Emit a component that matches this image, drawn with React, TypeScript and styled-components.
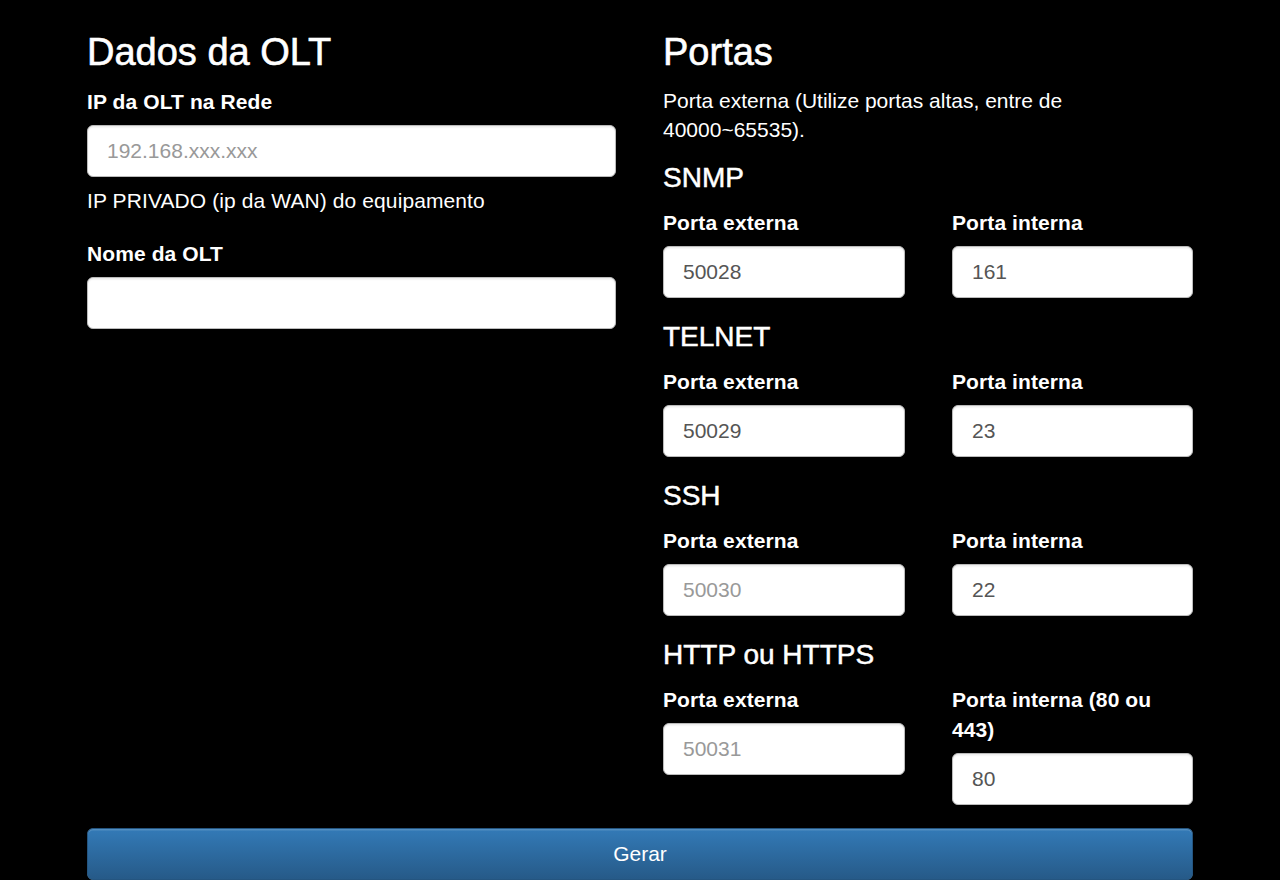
import React from 'react';
import styled, { createGlobalStyle } from 'styled-components';

const GlobalStyle = createGlobalStyle`
	* {
		box-sizing: border-box;
	}
	html,
	body {
		margin: 0;
		padding: 0;
		background: #000;
	}
	body {
		font-family: 'Liberation Sans', Arial, Helvetica, sans-serif;
		font-size: 21px;
		line-height: 30px;
		color: #fff;
	}
`;

type PortField = {
	label: string;
	value?: string;
	placeholder?: string;
};

type PortGroup = {
	title: string;
	external: PortField;
	internal: PortField;
};

const groups: PortGroup[] = [
	{
		title: 'SNMP',
		external: { label: 'Porta externa', value: '50028' },
		internal: { label: 'Porta interna', value: '161' },
	},
	{
		title: 'TELNET',
		external: { label: 'Porta externa', value: '50029' },
		internal: { label: 'Porta interna', value: '23' },
	},
	{
		title: 'SSH',
		external: { label: 'Porta externa', placeholder: '50030' },
		internal: { label: 'Porta interna', value: '22' },
	},
	{
		title: 'HTTP ou HTTPS',
		external: { label: 'Porta externa', placeholder: '50031' },
		internal: { label: 'Porta interna (80 ou 443)', value: '80' },
	},
];

const Field = ({ field }: { field: PortField }) => (
	<FieldBox>
		<Label>{field.label}</Label>
		<Input type="text" defaultValue={field.value} placeholder={field.placeholder} />
	</FieldBox>
);

export default function App() {
	return (
		<>
			<GlobalStyle />
			<Container>
				<Columns>
					<Column>
						<Heading>Dados da OLT</Heading>
						<FormGroup>
							<Label>IP da OLT na Rede</Label>
							<Input type="text" placeholder="192.168.xxx.xxx" />
							<Help>IP PRIVADO (ip da WAN) do equipamento</Help>
						</FormGroup>
						<FormGroup>
							<Label>Nome da OLT</Label>
							<Input type="text" />
						</FormGroup>
					</Column>
					<Column>
						<Heading>Portas</Heading>
						<Intro>Porta externa (Utilize portas altas, entre de 40000~65535).</Intro>
						{groups.map((g) => (
							<Group key={g.title}>
								<SubHeading>{g.title}</SubHeading>
								<PairRow>
									<Field field={g.external} />
									<Field field={g.internal} />
								</PairRow>
							</Group>
						))}
					</Column>
				</Columns>
				<SubmitButton type="button">Gerar</SubmitButton>
			</Container>
		</>
	);
}

const Container = styled.div`
	width: 1106px;
	margin: 0 auto;
	padding-top: 31px;
`;

const Columns = styled.div`
	display: grid;
	grid-template-columns: 529px 530px;
	column-gap: 47px;
`;

const Column = styled.div`
	display: flex;
	flex-direction: column;
`;

const Heading = styled.h3`
	margin: 0 0 14px;
	font-size: 38px;
	line-height: 42px;
	font-weight: 400;
	-webkit-text-stroke: 0.6px #fff;
`;

const FormGroup = styled.div`
	display: flex;
	flex-direction: column;
	margin-bottom: 23px;
`;

const Label = styled.label`
	display: block;
	margin-bottom: 8px;
	font-weight: 700;
	letter-spacing: 0.1px;
`;

const Input = styled.input`
	display: block;
	width: 100%;
	height: 52px;
	padding: 0 19px;
	font-family: inherit;
	font-size: 21px;
	color: #555;
	background: #fff;
	border: 1.5px solid #bbb;
	border-radius: 6px;
	box-shadow: inset 0 1.5px 1.5px rgba(0, 0, 0, 0.075);
	outline: none;

	&::placeholder {
		color: #999;
	}
`;

const Help = styled.p`
	margin: 9px 0 0;
	color: #fff;
	letter-spacing: 0.1px;
`;

const Intro = styled.p`
	margin: 0 0 18px;
	line-height: 28.5px;
	font-size: 21px;
`;

const Group = styled.div`
	display: flex;
	flex-direction: column;
	margin-bottom: 23px;
`;

const SubHeading = styled.h4`
	margin: 0 0 15px;
	font-size: 28px;
	line-height: 31px;
	font-weight: 400;
	-webkit-text-stroke: 0.5px #fff;
`;

const PairRow = styled.div`
	display: grid;
	grid-template-columns: 242px 241px;
	column-gap: 47px;
	align-items: start;
`;

const FieldBox = styled.div`
	display: flex;
	flex-direction: column;
`;

const SubmitButton = styled.button`
	display: block;
	width: 100%;
	height: 52px;
	margin-top: 0;
	font-family: inherit;
	font-size: 21px;
	color: #fff;
	background-image: linear-gradient(to bottom, #337ab7 0, #265a88 100%);
	border: 1.5px solid #245580;
	border-radius: 6px;
	box-shadow: inset 0 1.5px 0 rgba(255, 255, 255, 0.15);
	cursor: pointer;
`;
